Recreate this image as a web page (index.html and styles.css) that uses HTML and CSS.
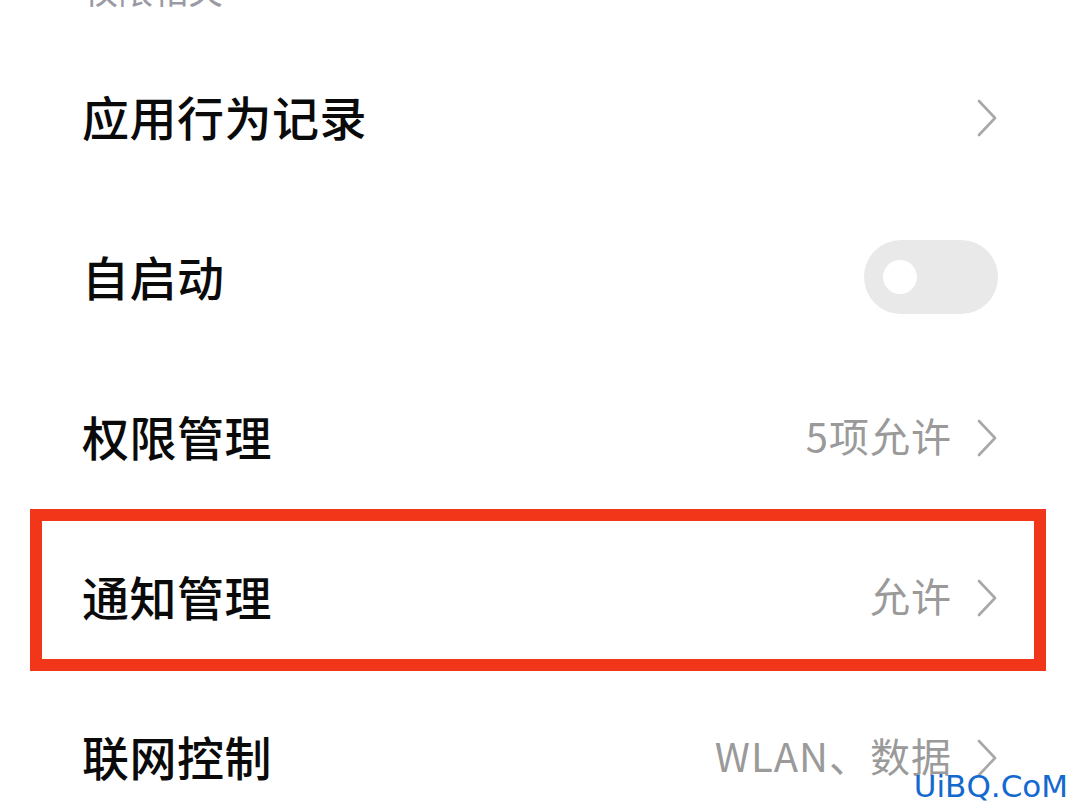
FILE: index.html
```html
<!DOCTYPE html>
<html lang="zh">
<head>
<meta charset="utf-8">
<link rel="stylesheet" href="styles.css">
</head>
<body>
<div class="page">
  <div class="section-title"><span>权限相关</span></div>
  <div class="list">
    <div class="row">
      <div class="label">应用行为记录</div>
      <div class="right">
        <svg class="chev" viewBox="0 0 22 40"><polyline points="3,3 19,20 3,37"/></svg>
      </div>
    </div>
    <div class="row">
      <div class="label">自启动</div>
      <div class="right">
        <div class="toggle"><div class="knob"></div></div>
      </div>
    </div>
    <div class="row">
      <div class="label">权限管理</div>
      <div class="right">
        <span class="value">5项允许</span>
        <svg class="chev" viewBox="0 0 22 40"><polyline points="3,3 19,20 3,37"/></svg>
      </div>
    </div>
    <div class="row highlighted">
      <div class="label">通知管理</div>
      <div class="right">
        <span class="value">允许</span>
        <svg class="chev" viewBox="0 0 22 40"><polyline points="3,3 19,20 3,37"/></svg>
      </div>
      <div class="mark"></div>
    </div>
    <div class="row">
      <div class="label">联网控制</div>
      <div class="right">
        <span class="value">WLAN、数据</span>
        <svg class="chev" viewBox="0 0 22 40"><polyline points="3,3 19,20 3,37"/></svg>
      </div>
    </div>
  </div>
  <div class="watermark">UiBQ.CoM</div>
</div>
</body>
</html>
```
FILE: styles.css
```css
html, body {
  margin: 0;
  padding: 0;
  background: #ffffff;
}
body {
  font-family: "Noto Sans CJK SC", "Noto Sans", sans-serif;
  width: 1080px;
  height: 810px;
  overflow: hidden;
}
.page {
  position: relative;
  width: 1080px;
  height: 810px;
  overflow: hidden;
}
.section-title {
  height: 39px;
  overflow: hidden;
  padding-left: 83px;
}
.section-title span {
  display: block;
  margin-top: -31px;
  font-size: 35px;
  line-height: 40px;
  color: #9a9aa4;
}
.list {
  display: flex;
  flex-direction: column;
}
.row {
  position: relative;
  height: 160px;
  box-sizing: border-box;
  display: flex;
  align-items: center;
  justify-content: space-between;
  padding: 0 82px 8px 82px;
}
.label {
  font-size: 47px;
  font-weight: 500;
  color: #0a0a0a;
  letter-spacing: 0.5px;
}
.right {
  display: flex;
  align-items: center;
  gap: 24px;
}
.value {
  font-size: 40px;
  color: #9a9a9a;
  letter-spacing: 1px;
}
.chev {
  width: 22px;
  height: 40px;
  margin-top: 6px;
  fill: none;
  stroke: #a8a8a8;
  stroke-width: 2.6;
  stroke-linecap: round;
  stroke-linejoin: round;
}
.toggle {
  width: 134px;
  height: 74px;
  border-radius: 37px;
  background: #e9e9e9;
  display: flex;
  align-items: center;
  padding-left: 19px;
  box-sizing: border-box;
  margin-top: 4px;
}
.knob {
  width: 34px;
  height: 34px;
  border-radius: 50%;
  background: #ffffff;
}
.mark {
  position: absolute;
  top: -10px;
  left: 30px;
  right: 34px;
  bottom: 8px;
  border: 12px solid #f1361a;
  pointer-events: none;
}
.watermark {
  position: absolute;
  right: 12px;
  bottom: 6px;
  font-family: "DejaVu Sans", sans-serif;
  font-size: 31px;
  color: #1469cf;
}
```
